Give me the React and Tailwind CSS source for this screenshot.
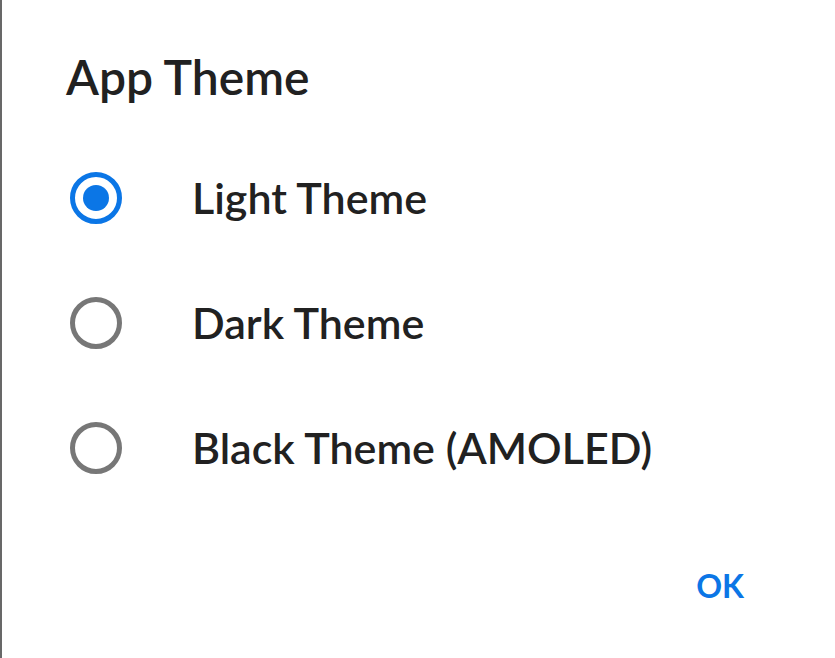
import { useState } from "react";

const themes = ["Light Theme", "Dark Theme", "Black Theme (AMOLED)"];

function Radio({ checked }) {
  return (
    <span
      className={
        "flex h-[52px] w-[52px] shrink-0 items-center justify-center rounded-full border-[5px] " +
        (checked ? "border-[#0b76e6]" : "border-[#777777]")
      }
    >
      {checked && <span className="h-[26px] w-[26px] rounded-full bg-[#0b76e6]" />}
    </span>
  );
}

export default function App() {
  const [theme, setTheme] = useState(0);

  return (
    <div
      className="flex h-[658px] w-[835px] flex-col border-l-2 border-[#686868] bg-white text-[#212121]"
      style={{ fontFamily: "Lato, 'Noto Sans', sans-serif" }}
    >
      <div className="h-[135px] pl-[64px] pt-[53px]">
        <h2 className="text-[48px] font-semibold leading-[48px]">App Theme</h2>
      </div>

      <div className="flex flex-col">
        {themes.map((name, i) => (
          <button
            key={name}
            type="button"
            onClick={() => setTheme(i)}
            className="flex h-[125px] items-center pl-[68px] text-left"
          >
            <Radio checked={theme === i} />
            <span className="pl-[70px] text-[43px] font-semibold leading-[43px]">{name}</span>
          </button>
        ))}
      </div>

      <div className="flex flex-1 items-start justify-end pr-[91px] pt-[60px]">
        <button type="button" className="text-[32px] font-bold leading-[32px] text-[#0b76e6]">
          OK
        </button>
      </div>
    </div>
  );
}
